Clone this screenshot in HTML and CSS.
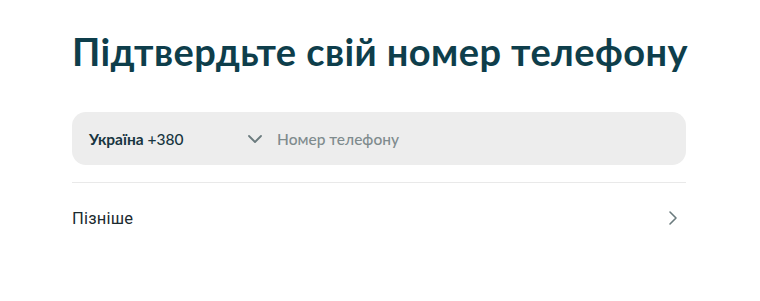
FILE: index.html
```html
<!DOCTYPE html>
<html lang="uk">
<head>
<meta charset="utf-8">
<title>Підтвердьте свій номер телефону</title>
<link rel="stylesheet" href="styles.css">
</head>
<body>
<main class="page">
  <h1 class="title">Підтвердьте свій номер телефону</h1>
  <div class="phone-field">
    <div class="country">
      <span class="country-name">Україна</span>
      <span class="country-code">+380</span>
    </div>
    <svg class="chev-down" width="16" height="10" viewBox="0 0 16 10" aria-hidden="true">
      <path d="M2 2 L8 8 L14 2" fill="none" stroke="#6b7b7e" stroke-width="1.8" stroke-linecap="round" stroke-linejoin="round"/>
    </svg>
    <input class="phone-input" type="tel" placeholder="Номер телефону">
  </div>
  <hr class="divider">
  <a class="later" href="#">
    <span>Пізніше</span>
    <svg class="chev-right" width="10" height="16" viewBox="0 0 10 16" aria-hidden="true">
      <path d="M2 2 L8 8 L2 14" fill="none" stroke="#6b7b7e" stroke-width="1.6" stroke-linecap="round" stroke-linejoin="round"/>
    </svg>
  </a>
</main>
</body>
</html>
```
FILE: styles.css
```css
* { box-sizing: border-box; }
html, body { margin: 0; background: #ffffff; }
body { font-family: "Lato", "Noto Sans", sans-serif; }
.page {
  width: 614px;
  margin-left: 72px;
  padding-top: 28px;
}
.title {
  margin: 0;
  font-family: "Lato", "Noto Sans", sans-serif;
  font-weight: 700;
  font-size: 38px;
  line-height: 46px;
  color: #0e3e4b;
  letter-spacing: 0.42px;
  white-space: nowrap;
}
.phone-field {
  margin-top: 38px;
  height: 53px;
  background: #ededed;
  border-radius: 14px;
  display: flex;
  align-items: center;
  padding-left: 17px;
}
.country {
  width: 143px;
  font-size: 15.5px;
  color: #173540;
}
.country-name { font-weight: 700; }
.country-code { font-weight: 500; }
.chev-down { flex: none; margin-left: 15px; }
.phone-input {
  flex: 1;
  margin-left: 14px;
  padding: 0;
  border: 0;
  background: transparent;
  font-family: "Lato", "Noto Sans", sans-serif;
  font-size: 15.5px;
  font-weight: 500;
  color: #173540;
  outline: none;
}
.phone-input::placeholder { color: #7f8b8d; }
.divider {
  margin: 17px 0 0;
  border: 0;
  border-top: 1px solid #e9e9e9;
}
.later {
  display: flex;
  align-items: center;
  justify-content: space-between;
  height: 70px;
  text-decoration: none;
  font-family: "Roboto", sans-serif;
  font-size: 16.5px;
  letter-spacing: 0.2px;
  color: #1c2b30;
  padding-right: 8px;
}
```
